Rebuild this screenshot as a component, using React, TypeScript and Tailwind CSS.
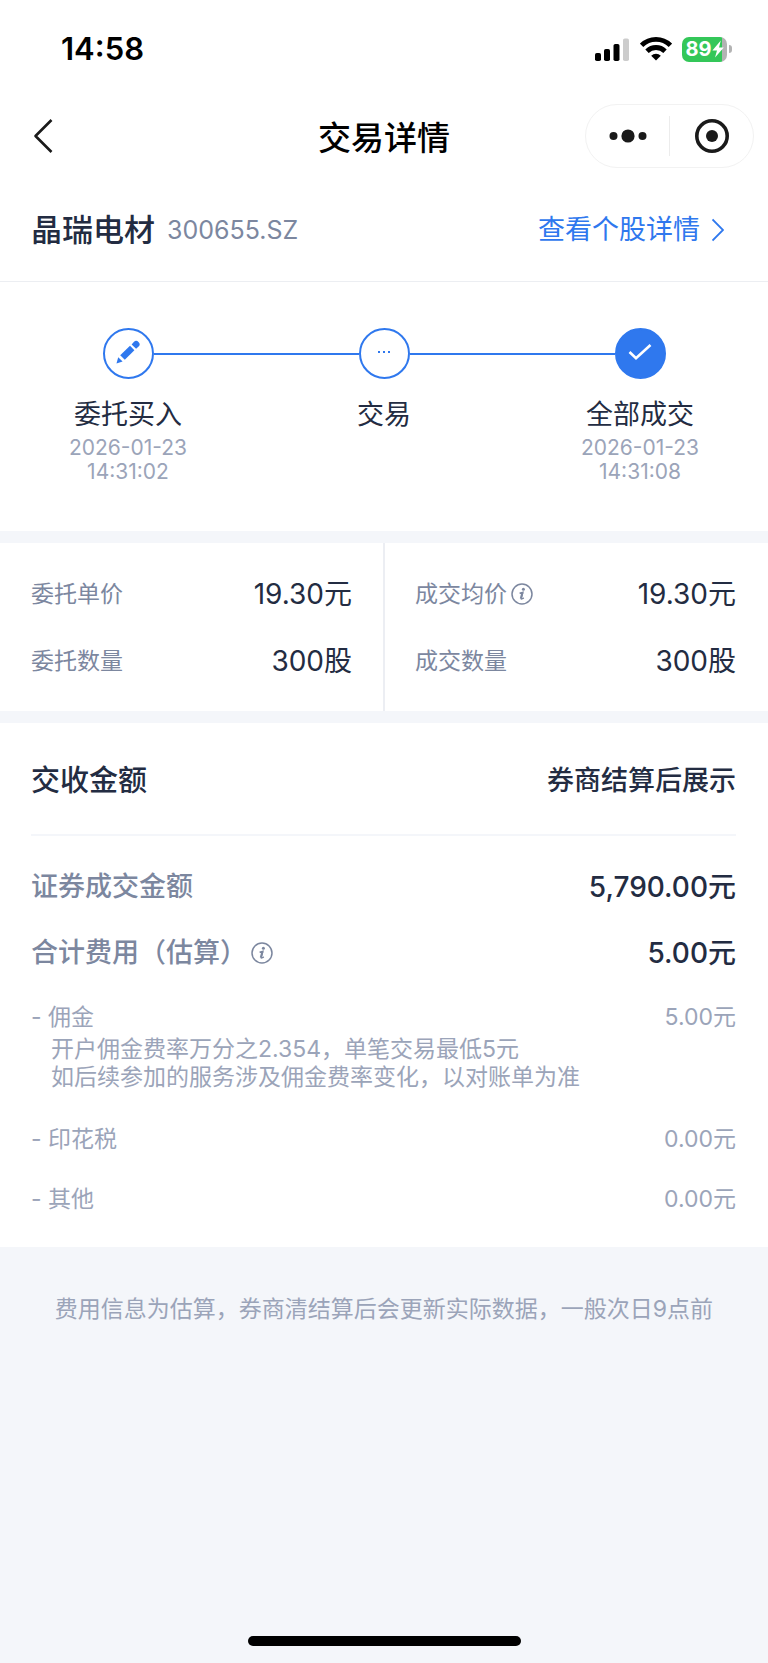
import React from 'react';

interface Step {
  label: string;
  date?: string;
  time?: string;
  icon: React.ReactNode;
  filled?: boolean;
}

interface Entry {
  label: string;
  value: string;
  info?: boolean;
  notes?: string[];
}

const PencilIcon = () => (
  <svg viewBox="0 0 24 24" className="w-6 h-6 -mt-1" fill="currentColor" aria-hidden="true">
    <path d="M0.5 23.4 2.2 17.2 6.6 21.4Z" />
    <path d="M4.2 15.3 14 5.8 18.4 10.2 8.8 19.8Z" />
    <path d="M15.6 4.4 17.8 2A3.3 3.3 0 0 1 22.6 6.6L20.1 8.8Z" />
  </svg>
);

const DotsIcon = () => (
  <svg viewBox="0 0 14 4" className="w-[14px] h-1 -mt-1" fill="currentColor" aria-hidden="true">
    <rect x="1" y="1" width="2" height="2" />
    <rect x="6" y="1" width="2" height="2" />
    <rect x="11" y="1" width="2" height="2" />
  </svg>
);

const CheckIcon = () => (
  <svg viewBox="0 0 24 18" className="w-6 h-[18px] -mt-1" fill="none" stroke="currentColor" strokeWidth="2.6" aria-hidden="true">
    <path d="M1.5 9 8 15.2 22.5 2" strokeLinejoin="miter" />
  </svg>
);

const steps: Step[] = [
  { label: '委托买入', date: '2026-01-23', time: '14:31:02', icon: <PencilIcon /> },
  { label: '交易', icon: <DotsIcon /> },
  { label: '全部成交', date: '2026-01-23', time: '14:31:08', icon: <CheckIcon />, filled: true },
];

const orderEntries: Entry[] = [
  { label: '委托单价', value: '19.30元' },
  { label: '委托数量', value: '300股' },
];

const dealEntries: Entry[] = [
  { label: '成交均价', value: '19.30元', info: true },
  { label: '成交数量', value: '300股' },
];

const fees: Entry[] = [
  {
    label: '佣金',
    value: '5.00元',
    notes: ['开户佣金费率万分之2.354，单笔交易最低5元', '如后续参加的服务涉及佣金费率变化，以对账单为准'],
  },
  { label: '印花税', value: '0.00元' },
  { label: '其他', value: '0.00元' },
];

const InfoButton = ({ label }: { label: string }) => (
  <button type="button" aria-label={label} className="w-[22px] h-[22px] text-[#7c879f]">
    <svg viewBox="0 0 22 22" className="w-[22px] h-[22px]" fill="none" stroke="currentColor" aria-hidden="true">
      <circle cx="11" cy="11" r="10" strokeWidth="1.5" />
      <circle cx="12.4" cy="6.2" r="1.5" fill="currentColor" stroke="none" />
      <path d="M8.6 10.2 11.9 9.4 10.2 15.4Q10 16.6 12.8 14.8" strokeWidth="1.5" />
      <path d="M11.4 9.8 9.8 15.6" strokeWidth="2" />
    </svg>
  </button>
);

const StatusBar = () => (
  <div className="flex items-center justify-between h-[98px] pl-[61px] pr-9 text-black">
    <span className="text-[31px] leading-9 font-semibold">14:58</span>
    <div className="flex items-center">
      <svg viewBox="0 0 34 24" className="w-[34px] h-6 mr-[11px]" aria-hidden="true">
        <rect x="0" y="16" width="6" height="8" rx="1.8" />
        <rect x="9" y="12" width="6" height="12" rx="1.8" />
        <rect x="18.5" y="7" width="6" height="17" rx="1.8" />
        <rect x="28" y="1.5" width="6" height="22.5" rx="1.8" fill="#cccccc" />
      </svg>
      <svg viewBox="0 0 32 24" className="w-8 h-6 mr-[10px]" fill="none" stroke="#000" strokeWidth="4.8" aria-hidden="true">
        <path d="M1.6 8.4A20.4 20.4 0 0 1 30.4 8.4" />
        <path d="M7 14.2A12.8 12.8 0 0 1 25 14.2" />
        <path d="M16 23.6 11.2 18.8A6.8 6.8 0 0 1 20.8 18.8Z" fill="#000" stroke="none" />
      </svg>
      <div className="flex items-center">
        <div className="flex items-center justify-center w-[45px] h-[25px] rounded-[7px] bg-linear-to-r from-[#34c759] from-90% to-[#b3b3b3] to-90% text-white">
          <span className="text-xl leading-6 font-bold">89</span>
          <svg viewBox="0 0 12 18" className="w-3 h-[18px]" fill="currentColor" aria-hidden="true">
            <path d="M8.8 0.5 0.4 10.4H5L3 17.6 11.8 7.4H7Z" />
          </svg>
        </div>
        <span className="w-[3px] h-2 ml-[2px] rounded-r-full bg-[#b3b3b3]" />
      </div>
    </div>
  </div>
);

const NavBar = () => (
  <header className="grid grid-cols-[1fr_auto_1fr] items-center h-[76px]">
    <button type="button" aria-label="返回" className="ml-8 w-6 h-10 justify-self-start text-[#1a1a1a]">
      <svg viewBox="0 0 24 40" className="w-6 h-10" fill="none" stroke="currentColor" strokeWidth="2.6" aria-hidden="true">
        <path d="M19.5 4 3.5 20 19.5 36" strokeLinejoin="round" />
      </svg>
    </button>
    <h1 className="pt-1 text-[33px] leading-10 font-medium text-black">交易详情</h1>
    <div className="flex items-center justify-self-end mr-[14px] w-[169px] h-16 rounded-full border border-[#f2f2f2] text-[#1a1a1a]">
      <button type="button" aria-label="更多" className="flex-1 flex justify-center">
        <svg viewBox="0 0 38 14" className="w-[38px] h-[14px]" fill="currentColor" aria-hidden="true">
          <circle cx="4.5" cy="7" r="4" />
          <circle cx="19" cy="7" r="6.6" />
          <circle cx="33.5" cy="7" r="4" />
        </svg>
      </button>
      <span className="w-px h-10 bg-[#ececec]" />
      <button type="button" aria-label="关闭" className="flex-1 flex justify-center">
        <svg viewBox="0 0 34 34" className="w-[34px] h-[34px]" aria-hidden="true">
          <circle cx="17" cy="17" r="15.2" fill="none" stroke="currentColor" strokeWidth="3.6" />
          <circle cx="17" cy="17" r="6" fill="currentColor" />
        </svg>
      </button>
    </div>
  </header>
);

const Stepper = () => (
  <ol className="grid grid-cols-3 pt-[46px] pb-[47px]">
    {steps.map(({ label, date, time, icon, filled }, i) => (
      <li key={label} className="flex flex-col items-center">
        <div className="flex items-center w-full">
          <span className={`flex-1 h-[2px] ${i > 0 ? 'bg-[#2f78ee]' : ''}`} />
          <span
            className={`flex items-center justify-center w-[51px] h-[51px] rounded-full border-2 border-[#2f78ee] ${
              filled ? 'bg-[#2f78ee] text-white' : 'text-[#2f78ee]'
            }`}
          >
            {icon}
          </span>
          <span className={`flex-1 h-[2px] ${i < steps.length - 1 ? 'bg-[#2f78ee]' : ''}`} />
        </div>
        <span className="mt-4 text-[27px] leading-10 text-[#232c42]">{label}</span>
        <span className="pt-px text-[21px] leading-6 text-[#9ba4b9] text-center">
          {date}
          <br />
          {time}
        </span>
      </li>
    ))}
  </ol>
);

const PriceColumn = ({ entries }: { entries: Entry[] }) => (
  <dl className="flex-1 pl-[31px] pr-8 pt-[34px] pb-[33px] space-y-[33px]">
    {entries.map(({ label, value, info }) => (
      <div key={label} className="flex items-center justify-between h-[34px]">
        <dt className="flex items-center gap-1 text-[23px] leading-[34px] text-[#7c879f]">
          {label}
          {info && <InfoButton label="成交均价说明" />}
        </dt>
        <dd className="text-[28px] leading-[34px] text-[#232c42]">{value}</dd>
      </div>
    ))}
  </dl>
);

const App: React.FC = () => {
  return (
    <div className="flex flex-col min-h-screen bg-[#f4f6fa] font-['Inter','Noto_Sans_CJK_SC',sans-serif]" lang="zh-CN">
      <div className="bg-white">
        <StatusBar />
        <NavBar />

        {/* Stock */}
        <section className="flex items-center justify-between h-[108px] pt-1 pl-[31px] pr-11 border-b border-[#eceef2]">
          <div className="flex items-center gap-3">
            <h2 className="text-[31px] leading-10 font-medium text-[#232c42]">晶瑞电材</h2>
            <span className="text-[25px] leading-10 text-[#7c879f]">300655.SZ</span>
          </div>
          <a href="#stock" className="flex items-center gap-3 text-[27px] leading-10 text-[#2f78ee]">
            查看个股详情
            <svg viewBox="0 0 12 24" className="w-3 h-6" fill="none" stroke="currentColor" strokeWidth="1.8" aria-hidden="true">
              <path d="M0.5 1.5 11 12 0.5 22.5" />
            </svg>
          </a>
        </section>

        <Stepper />
      </div>

      {/* Order vs deal */}
      <section className="flex mt-3 bg-white">
        <PriceColumn entries={orderEntries} />
        <span className="w-[2px] -mx-px bg-[#eceef3]" />
        <PriceColumn entries={dealEntries} />
      </section>

      {/* Settlement */}
      <section className="mt-3 pl-[31px] pr-8 pb-8 bg-white text-[#232c42]">
        <div className="flex items-center justify-between h-[113px] pt-1 border-b-2 border-[#f4f6fa] font-medium">
          <h2 className="text-[29px] leading-10">交收金额</h2>
          <span className="text-[27px] leading-10">券商结算后展示</span>
        </div>

        <dl>
          <div className="flex items-center justify-between mt-[31px] font-medium">
            <dt className="text-[27px] leading-10 text-[#7c879f]">证券成交金额</dt>
            <dd className="text-[28px] leading-10">5,790.00元</dd>
          </div>
          <div className="flex items-center justify-between mt-[26px] font-medium">
            <dt className="flex items-center gap-1 text-[27px] leading-10 text-[#7c879f]">
              合计费用（估算）
              <InfoButton label="合计费用说明" />
            </dt>
            <dd className="text-[28px] leading-10">5.00元</dd>
          </div>

          <div className="mt-7 space-y-7 text-[23px] leading-8 text-[#9ba4b9]">
            {fees.map(({ label, value, notes }) => (
              <div key={label} className="flex items-start justify-between">
                <dt>
                  - {label}
                  {notes && (
                    <p className="pl-5 pt-[2px] pb-1 leading-7">
                      {notes[0]}
                      <br />
                      {notes[1]}
                    </p>
                  )}
                </dt>
                <dd>{value}</dd>
              </div>
            ))}
          </div>
        </dl>
      </section>

      <p className="pt-11 px-8 text-center text-[23px] leading-9 text-[#9ba4b9]">
        费用信息为估算，券商清结算后会更新实际数据，一般次日9点前
      </p>

      {/* Home indicator */}
      <div className="mt-auto mb-[17px] self-center w-[273px] h-[10px] rounded-full bg-black" />
    </div>
  );
};

export default App;
